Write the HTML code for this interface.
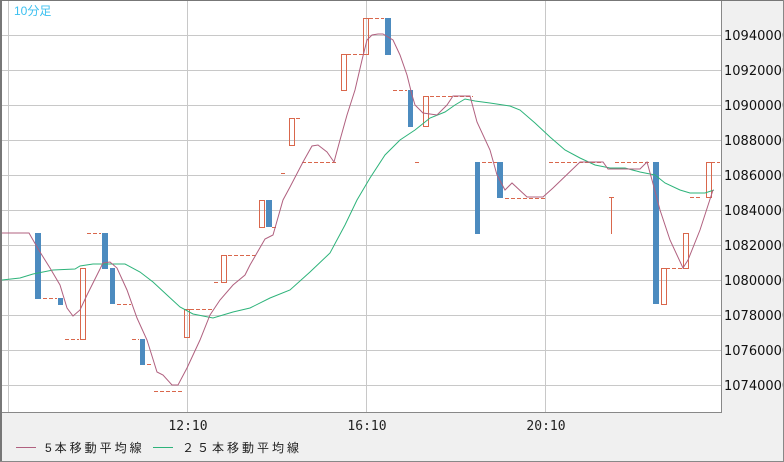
<!DOCTYPE html>
<html><head><meta charset="utf-8"><style>
html,body{margin:0;padding:0;width:784px;height:462px;overflow:hidden;background:#f0f0f0}
svg{display:block}
</style></head><body>
<svg width="784" height="462" xmlns="http://www.w3.org/2000/svg">
<rect x="0" y="0" width="784" height="462" fill="#f0f0f0"/>
<rect x="2" y="1" width="719" height="411" fill="#fff"/>
<g stroke="#c8c8c8" stroke-width="1">
<line x1="2" x2="721" y1="35.5" y2="35.5"/><line x1="2" x2="721" y1="70.5" y2="70.5"/><line x1="2" x2="721" y1="105.5" y2="105.5"/><line x1="2" x2="721" y1="140.5" y2="140.5"/><line x1="2" x2="721" y1="175.5" y2="175.5"/><line x1="2" x2="721" y1="210.5" y2="210.5"/><line x1="2" x2="721" y1="245.5" y2="245.5"/><line x1="2" x2="721" y1="280.5" y2="280.5"/><line x1="2" x2="721" y1="315.5" y2="315.5"/><line x1="2" x2="721" y1="350.5" y2="350.5"/><line x1="2" x2="721" y1="385.5" y2="385.5"/>
<line x1="8.5" x2="8.5" y1="1" y2="412"/><line x1="187.5" x2="187.5" y1="1" y2="412"/><line x1="366.5" x2="366.5" y1="1" y2="412"/><line x1="545.5" x2="545.5" y1="1" y2="412"/>
</g>
<text x="14" y="15" font-family="Liberation Sans, Noto Sans CJK JP, sans-serif" font-size="12" fill="#3cc0f0">10分足</text>
<g stroke="#d9674c" stroke-width="1" stroke-dasharray="4,2" fill="none">
<line x1="43" x2="57" y1="298.5" y2="298.5"/><line x1="65" x2="79" y1="339.5" y2="339.5"/><line x1="87" x2="101" y1="233.5" y2="233.5"/><line x1="117" x2="131" y1="304.5" y2="304.5"/><line x1="132" x2="139" y1="339.5" y2="339.5"/><line x1="147" x2="153" y1="364.5" y2="364.5"/><line x1="154" x2="183" y1="391.5" y2="391.5"/><line x1="190" x2="213" y1="309.5" y2="309.5"/><line x1="214" x2="220" y1="282.5" y2="282.5"/><line x1="228" x2="256" y1="255.5" y2="255.5"/><line x1="272" x2="278" y1="227.5" y2="227.5"/><line x1="281" x2="287" y1="173.5" y2="173.5"/><line x1="296" x2="302" y1="118.5" y2="118.5"/><line x1="302" x2="338" y1="162.5" y2="162.5"/><line x1="347" x2="363" y1="54.5" y2="54.5"/><line x1="369" x2="384" y1="18.5" y2="18.5"/><line x1="393" x2="407" y1="90.5" y2="90.5"/><line x1="415" x2="421" y1="162.5" y2="162.5"/><line x1="430" x2="473" y1="96.5" y2="96.5"/><line x1="482" x2="497" y1="162.5" y2="162.5"/><line x1="505" x2="546" y1="198.5" y2="198.5"/><line x1="549" x2="601" y1="162.5" y2="162.5"/><line x1="615" x2="651" y1="162.5" y2="162.5"/><line x1="666" x2="683" y1="268.5" y2="268.5"/><line x1="690" x2="701" y1="197.5" y2="197.5"/><line x1="711" x2="720" y1="162.5" y2="162.5"/>
</g>
<g stroke="#d9674c" stroke-width="1" fill="none">
<rect x="80.5" y="268.5" width="5" height="71"/><rect x="184.5" y="309.5" width="5" height="28"/><rect x="221.5" y="255.5" width="5" height="27"/><rect x="259.5" y="200.5" width="5" height="27"/><rect x="289.5" y="118.5" width="5" height="27"/><rect x="341.5" y="54.5" width="5" height="36"/><rect x="363.5" y="18.5" width="5" height="36"/><rect x="423.5" y="96.5" width="5" height="30"/><rect x="661.5" y="268.5" width="5" height="36"/><rect x="683.5" y="233.5" width="5" height="35"/><rect x="706.5" y="162.5" width="5" height="35"/>
<line x1="611.5" x2="611.5" y1="197" y2="234"/><line x1="609" x2="614" y1="197.5" y2="197.5"/>
</g>
<g fill="#4c8bbf">
<rect x="35" y="233" width="6" height="66"/><rect x="58" y="298" width="5" height="7"/><rect x="102" y="233" width="6" height="36"/><rect x="110" y="268" width="5" height="36"/><rect x="140" y="339" width="5" height="26"/><rect x="266" y="200" width="6" height="27"/><rect x="385" y="18" width="6" height="37"/><rect x="408" y="90" width="5" height="37"/><rect x="475" y="162" width="5" height="72"/><rect x="497" y="162" width="6" height="36"/><rect x="653" y="162" width="6" height="142"/>
</g>
<polyline fill="none" stroke="#2db37a" stroke-width="1" points="2,280 20,278 33,274 53,270 75,269 80,266 93,264 125,264 140,272 153,282 167,295 180,307 193,314 213,318 233,312 250,308 270,298 290,290 310,272 330,253 345,225 357,200 370,178 385,155 400,140 415,130 430,118 445,112 455,105 465,99 475,101 490,103 510,106 520,110 535,123 550,137 565,150 580,158 595,165 610,168 625,168 640,172 655,175 665,183 680,190 690,193 705,193 714,190"/>
<polyline fill="none" stroke="#b0607f" stroke-width="1" points="2,233 29,233 33,240 40,252 50,268 60,285 67,308 73,316 80,310 87,295 97,275 103,263 110,262 117,268 127,290 137,318 147,340 157,372 163,375 172,385 178,385 187,368 200,340 210,315 220,300 233,285 245,275 250,265 265,239 273,235 283,200 290,187 303,162 312,146 318,145 327,152 334,162 340,140 347,115 355,90 362,60 367,40 372,35 378,34 383,34 393,40 400,55 407,75 412,95 415,105 423,113 437,115 447,105 453,96 470,96 477,122 490,150 497,175 505,190 512,183 527,197 543,197 553,188 580,162 603,162 608,169 640,169 647,162 652,180 660,210 670,240 683,268 688,260 700,230 713,190"/>
<rect x="0" y="0" width="784" height="1" fill="#777"/>
<rect x="0" y="0" width="2" height="462" fill="#777"/>
<rect x="721" y="1" width="1" height="412" fill="#888"/>
<rect x="2" y="412" width="720" height="1" fill="#888"/>
<g font-family="DejaVu Sans, sans-serif" font-size="13" fill="#111">
<text x="724" y="40">10940000</text><text x="724" y="75">10920000</text><text x="724" y="110">10900000</text><text x="724" y="145">10880000</text><text x="724" y="180">10860000</text><text x="724" y="215">10840000</text><text x="724" y="250">10820000</text><text x="724" y="285">10800000</text><text x="724" y="320">10780000</text><text x="724" y="355">10760000</text><text x="724" y="390">10740000</text>
</g>
<rect x="0" y="461" width="784" height="1" fill="#888"/>
<rect x="783" y="0" width="1" height="462" fill="#888"/>
<g font-family="DejaVu Sans Mono, monospace" font-size="13" fill="#222" text-anchor="middle">
<text x="188" y="430">12:10</text><text x="367" y="430">16:10</text><text x="546" y="430">20:10</text>
</g>
<line x1="16" x2="36" y1="447.5" y2="447.5" stroke="#b0607f"/>
<line x1="153" x2="173" y1="447.5" y2="447.5" stroke="#2db37a"/>
<g font-family="Liberation Sans, Noto Sans CJK JP, sans-serif" font-size="12" fill="#222" letter-spacing="3">
<text x="45" y="452">5本移動平均線</text><text x="182" y="452">２５本移動平均線</text>
</g>
</svg>
</body></html>
